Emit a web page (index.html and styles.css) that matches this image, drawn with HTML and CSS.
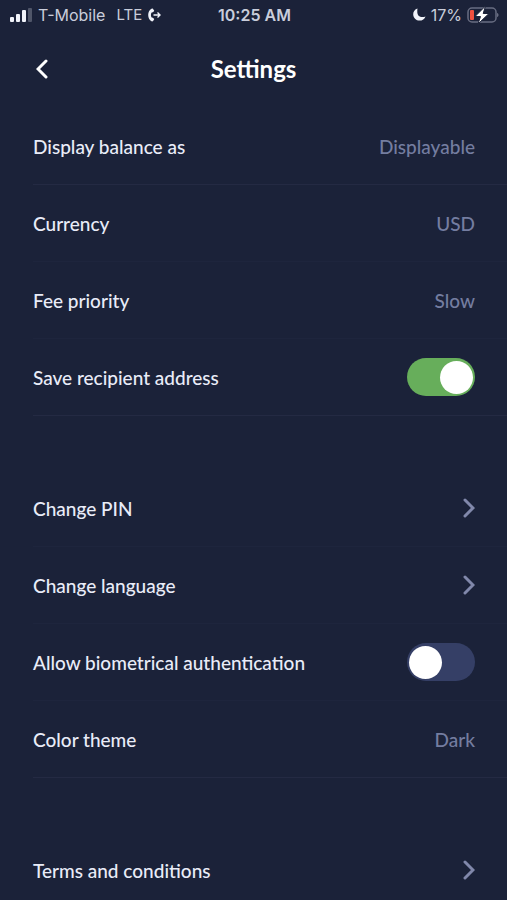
FILE: index.html
```html
<!DOCTYPE html>
<html lang="en">
<head>
  <meta charset="UTF-8" />
  <meta name="viewport" content="width=device-width, initial-scale=1.0" />
  <title>Settings</title>
  <link rel="stylesheet" href="styles.css">
</head>
<body>
  <div class="status-bar">
    <div class="status-left">
      <svg class="signal" width="22" height="14" viewBox="0 0 22 14" aria-hidden="true">
        <rect x="0" y="9" width="4" height="5" rx="1" />
        <rect x="6" y="6" width="4" height="8" rx="1" />
        <rect x="12" y="2" width="4" height="12" rx="1" />
        <rect x="18" y="0" width="4" height="14" rx="1" opacity="0.25" />
      </svg>
      <span class="carrier">T-Mobile</span>
      <span class="network">LTE</span>
      <svg class="call" width="13" height="14" viewBox="0 0 13 14" aria-hidden="true">
        <path class="handset" d="M3.600.7C1.400 1.900.2 4.200.2 7s1.200 5.100 3.400 6.300c.5.3 1.100.2 1.400-.2l1-1.300c.3-.5.2-1-.2-1.300l-1.200-.8c-.3-.2-.7-.2-1-.1C3.100 8.700 2.900 7.900 2.900 7s.2-1.700.7-2.600c.3.1.7.1 1-.1l1.200-.8c.4-.3.5-.8.2-1.300L5 .9C4.700.5 4.100.4 3.600.7z" />
        <path class="arrow" d="M5.500 7H12M9.500 4.500 12 7 9.500 9.500" />
      </svg>
    </div>
    <div class="time">10:25 AM</div>
    <div class="status-right">
      <svg class="moon" width="13" height="13" viewBox="0 0 13 13" aria-hidden="true">
        <path d="M4.500.4C1.900 1.200.2 3.500.2 6.200c0 3.600 2.800 6.400 6.300 6.400 2.800 0 5.200-1.700 6-4.200-1 .5-2 .7-3 .7-3.300 0-5.200-2.200-5.200-5.200 0-1.300-.1-2.400.2-3.500z" />
      </svg>
      <span>17%</span>
      <svg class="battery" width="32" height="18" viewBox="0 0 32 18" aria-hidden="true">
        <rect class="shell" x="1" y="2" width="28" height="14" rx="4" />
        <path class="cap" d="M30 7v4c1-.4 1.500-1.100 1.500-2S31 7.400 30 7z" />
        <rect class="charge" x="3" y="4" width="4" height="10" rx="1" />
        <path class="bolt" d="M18.500 0 8 10.500h5.500L11 18 22 7.500h-5.800z" />
      </svg>
    </div>
  </div>

  <header class="header">
    <button class="back" type="button" aria-label="Back">
      <svg width="12" height="20" viewBox="0 0 12 20" aria-hidden="true">
        <path d="M10 2 2 10l8 8" />
      </svg>
    </button>
    <h1>Settings</h1>
  </header>

  <main class="settings">
    <section class="group">
      <button class="row" type="button">
        <span>Display balance as</span>
        <span class="value">Displayable</span>
      </button>
      <button class="row" type="button">
        <span>Currency</span>
        <span class="value">USD</span>
      </button>
      <button class="row" type="button">
        <span>Fee priority</span>
        <span class="value">Slow</span>
      </button>
      <div class="row">
        <label for="save-address">Save recipient address</label>
        <input class="switch" type="checkbox" role="switch" id="save-address" checked>
      </div>
    </section>

    <section class="group">
      <a class="row" href="#pin">
        <span>Change PIN</span>
        <svg class="chevron" width="12" height="20" viewBox="0 0 12 20" aria-hidden="true"><path d="M2 2l8 8-8 8" /></svg>
      </a>
      <a class="row" href="#language">
        <span>Change language</span>
        <svg class="chevron" width="12" height="20" viewBox="0 0 12 20" aria-hidden="true"><path d="M2 2l8 8-8 8" /></svg>
      </a>
      <div class="row">
        <label for="biometrics">Allow biometrical authentication</label>
        <input class="switch" type="checkbox" role="switch" id="biometrics">
      </div>
      <button class="row" type="button">
        <span>Color theme</span>
        <span class="value">Dark</span>
      </button>
    </section>

    <section class="group">
      <a class="row" href="#terms">
        <span>Terms and conditions</span>
        <svg class="chevron" width="12" height="20" viewBox="0 0 12 20" aria-hidden="true"><path d="M2 2l8 8-8 8" /></svg>
      </a>
    </section>
  </main>
</body>
</html>
```

FILE: styles.css
```css
:root {
  --bg: #1b2239;
  --text: #e9ecf8;
  --muted: #747da0;
  --line: #1e253d;
  --line-end: #242a43;
  --green: #67ae5b;
  --switch-off: #353f66;
}
* {
  box-sizing: border-box;
}
body {
  margin: 0;
  background-color: var(--bg);
  color: var(--text);
  font-family: Lato, "Open Sans", sans-serif;
  font-size: 19px;
  font-weight: 500;
}

/* status bar */
.status-bar {
  display: grid;
  grid-template-columns: 1fr auto 1fr;
  align-items: center;
  height: 29px;
  padding: 0 8px 0 10px;
  font-family: Inter, Roboto, sans-serif;
  font-size: 16px;
  font-weight: 400;
  color: #c9cddb;
}
.status-left,
.status-right {
  display: flex;
  align-items: center;
}
.status-right {
  justify-content: flex-end;
  gap: 5px;
}
.carrier {
  margin: 0 11px 0 6px;
}
.network {
  font-size: 15px;
}
.time {
  font-weight: 600;
}
.signal,
.moon,
.handset {
  fill: #f1f3fa;
}
.call {
  margin-left: 6px;
}
.arrow {
  fill: none;
  stroke: #f1f3fa;
  stroke-width: 1.4;
}
.shell {
  fill: none;
  stroke: #686d82;
  stroke-width: 1.5;
}
.cap {
  fill: #686d82;
}
.charge {
  fill: #f0503f;
}
.bolt {
  fill: #fff;
  stroke: var(--bg);
  stroke-width: 1;
}

/* header */
.header {
  display: grid;
  grid-template-columns: 1fr auto 1fr;
  align-items: center;
  height: 79px;
  padding: 0 33px;
}
.header h1 {
  margin: 0;
  font-size: 24px;
  font-weight: 700;
  color: #fff;
}
.back {
  justify-self: start;
  display: flex;
  padding: 3px;
  border: 0;
  background: none;
  cursor: pointer;
}
.back path {
  fill: none;
  stroke: #fff;
  stroke-width: 3;
  stroke-linecap: round;
}

/* list */
.settings {
  display: flex;
  flex-direction: column;
  gap: 54px;
}
.group {
  display: flex;
  flex-direction: column;
  padding-left: 33px;
}
.row {
  display: flex;
  align-items: center;
  justify-content: space-between;
  height: 77px;
  padding: 0 32px 0 0;
  border: 0;
  border-bottom: 1px solid var(--line);
  background: none;
  color: inherit;
  font: inherit;
  text-align: left;
  text-decoration: none;
}
.group:first-child .row:first-child,
.row:last-child {
  border-bottom-color: var(--line-end);
}
.value {
  color: var(--muted);
}
.chevron path {
  fill: none;
  stroke: #8188ab;
  stroke-width: 3;
  stroke-linecap: round;
}

/* toggle */
.switch {
  appearance: none;
  display: flex;
  align-items: center;
  width: 68px;
  height: 38px;
  margin: 0;
  padding: 0 2px;
  border-radius: 19px;
  background-color: var(--switch-off);
  cursor: pointer;
}
.switch::before {
  content: "";
  width: 33px;
  height: 33px;
  border-radius: 50%;
  background-color: #fff;
}
.switch:checked {
  justify-content: flex-end;
  background-color: var(--green);
}
```
